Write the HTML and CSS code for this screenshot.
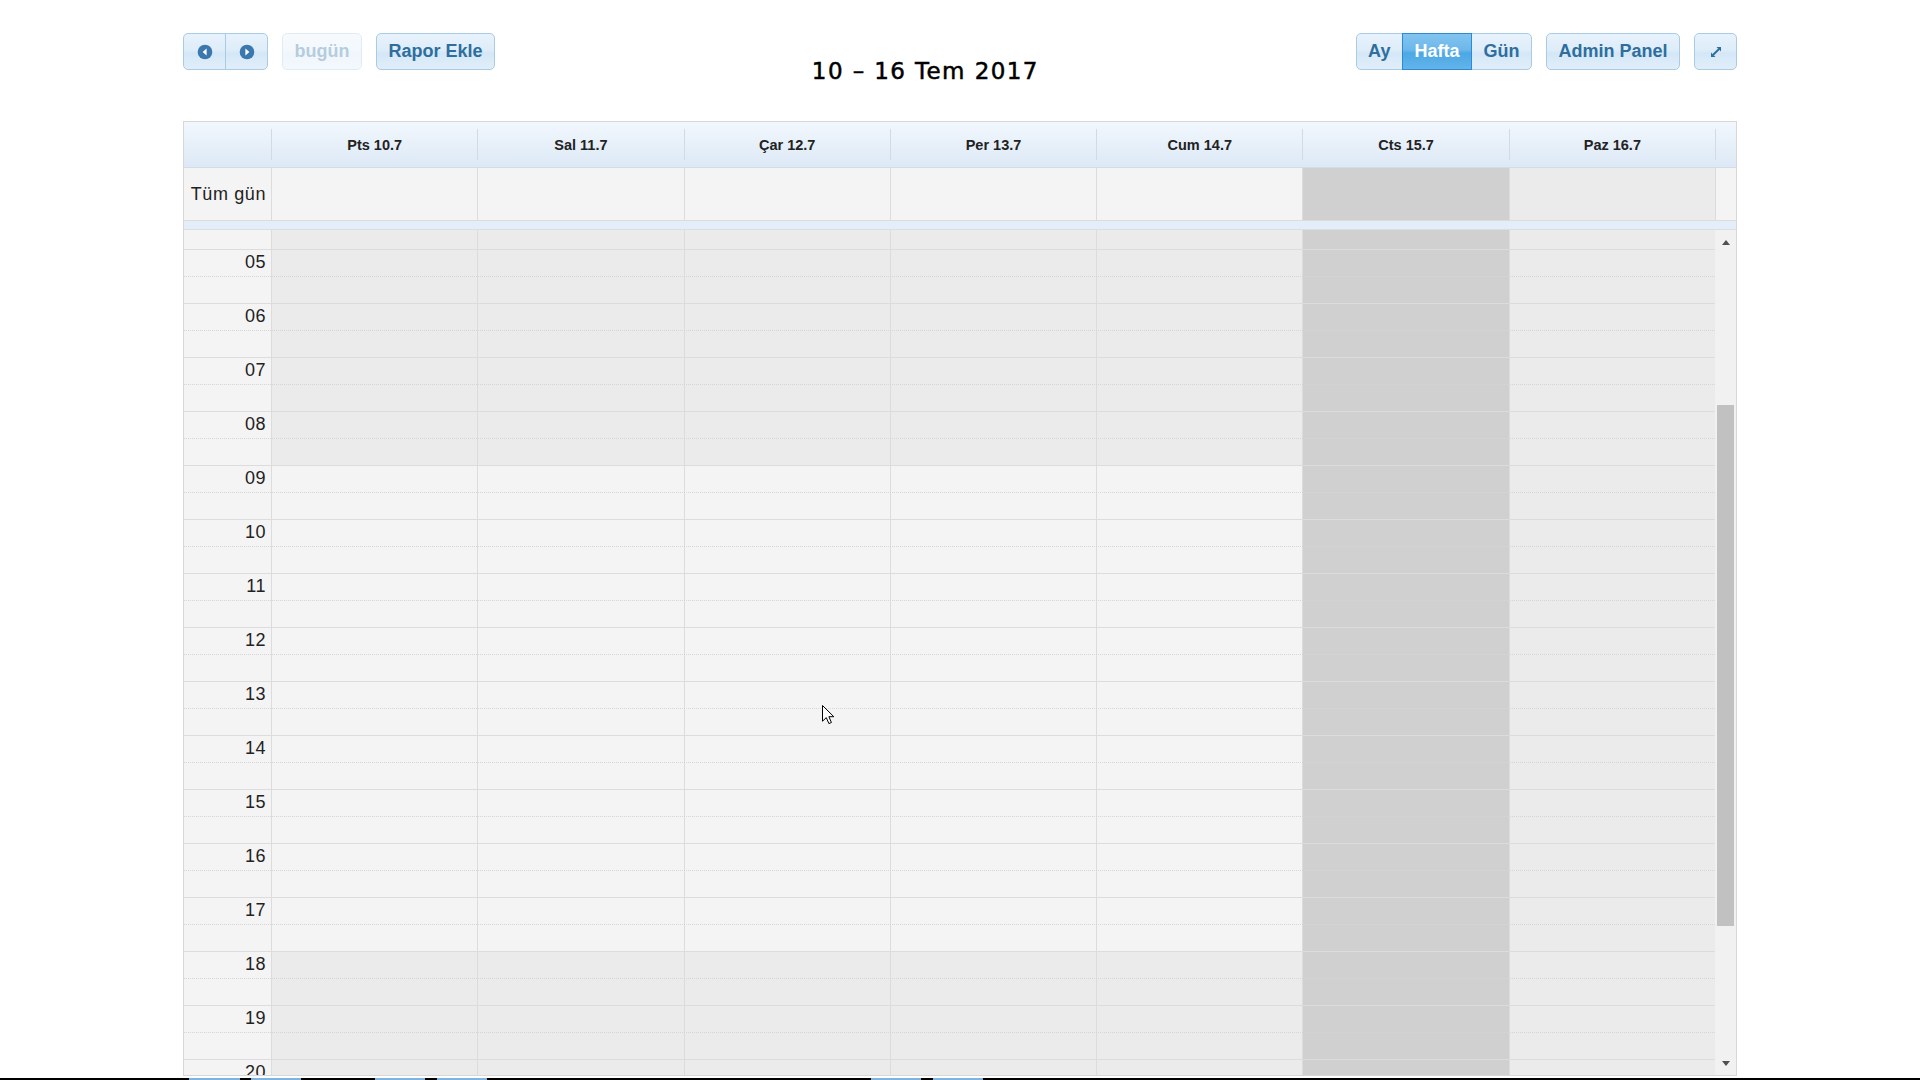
FILE: index.html
```html
<!DOCTYPE html>
<html lang="tr">
<head>
<meta charset="utf-8">
<title>Takvim</title>
<link rel="stylesheet" href="styles.css">
</head>
<body>
<div class="page">
  <div class="toolbar">
    <div class="tb-left">
      <div class="btn-group">
        <button class="btn btn-icon"><svg width="16" height="16" viewBox="0 0 16 16"><circle cx="8" cy="8" r="7.3" fill="#3a78ad"/><path d="M5.6 8 L9.6 4.6 L9.6 11.4 Z" fill="#fff"/></svg></button>
        <button class="btn btn-icon"><svg width="16" height="16" viewBox="0 0 16 16"><circle cx="8" cy="8" r="7.3" fill="#3a78ad"/><path d="M10.4 8 L6.4 4.6 L6.4 11.4 Z" fill="#fff"/></svg></button>
      </div>
      <button class="btn disabled">bugün</button>
      <button class="btn">Rapor Ekle</button>
    </div>
    <div class="tb-center"><h2 class="title">10 – 16 Tem 2017</h2></div>
    <div class="tb-right">
      <div class="btn-group">
        <button class="btn">Ay</button>
        <button class="btn active">Hafta</button>
        <button class="btn">Gün</button>
      </div>
      <button class="btn">Admin Panel</button>
      <button class="btn btn-icon"><svg width="12" height="12" viewBox="0 0 12 12"><path d="M6.5 1 H11 V5.5 Z M1 6.5 V11 H5.5 Z" fill="#2e6e9e"/><path d="M3 9 L9 3" stroke="#2e6e9e" stroke-width="2"/></svg></button>
    </div>
  </div>

  <div class="cal">
    <div class="cal-head">
      <div class="hcell"></div>
      <div class="hcell"><span>Pts 10.7</span></div>
      <div class="hcell"><span>Sal 11.7</span></div>
      <div class="hcell"><span>Çar 12.7</span></div>
      <div class="hcell"><span>Per 13.7</span></div>
      <div class="hcell"><span>Cum 14.7</span></div>
      <div class="hcell"><span>Cts 15.7</span></div>
      <div class="hcell"><span>Paz 16.7</span></div>
      <div class="hcell"><span></span></div>
    </div>
    <div class="allday">
      <div class="ad-axis">Tüm gün</div>
      <div class="ad-cell"></div>
      <div class="ad-cell"></div>
      <div class="ad-cell"></div>
      <div class="ad-cell"></div>
      <div class="ad-cell"></div>
      <div class="ad-cell sat"></div>
      <div class="ad-cell sun"></div>
      <div class="ad-cell"></div>
    </div>
    <div class="divider"></div>
    <div class="tg">
      <div class="tg-main">
        <div class="bg-layer">
          <div class="bcol axis"></div>
          <div class="bcol"><div class="seg-a off"></div><div class="seg-b on"></div><div class="seg-c off"></div></div>
          <div class="bcol"><div class="seg-a off"></div><div class="seg-b on"></div><div class="seg-c off"></div></div>
          <div class="bcol"><div class="seg-a off"></div><div class="seg-b on"></div><div class="seg-c off"></div></div>
          <div class="bcol"><div class="seg-a off"></div><div class="seg-b on"></div><div class="seg-c off"></div></div>
          <div class="bcol"><div class="seg-a off"></div><div class="seg-b on"></div><div class="seg-c off"></div></div>
          <div class="bcol sat"></div>
          <div class="bcol sun"></div>
        </div>
        <div class="slats">
          <div class="slat partial"></div>
          <div class="slat"><div class="lbl">05</div></div><div class="slat half"></div>
          <div class="slat"><div class="lbl">06</div></div><div class="slat half"></div>
          <div class="slat"><div class="lbl">07</div></div><div class="slat half"></div>
          <div class="slat"><div class="lbl">08</div></div><div class="slat half"></div>
          <div class="slat"><div class="lbl">09</div></div><div class="slat half"></div>
          <div class="slat"><div class="lbl">10</div></div><div class="slat half"></div>
          <div class="slat"><div class="lbl">11</div></div><div class="slat half"></div>
          <div class="slat"><div class="lbl">12</div></div><div class="slat half"></div>
          <div class="slat"><div class="lbl">13</div></div><div class="slat half"></div>
          <div class="slat"><div class="lbl">14</div></div><div class="slat half"></div>
          <div class="slat"><div class="lbl">15</div></div><div class="slat half"></div>
          <div class="slat"><div class="lbl">16</div></div><div class="slat half"></div>
          <div class="slat"><div class="lbl">17</div></div><div class="slat half"></div>
          <div class="slat"><div class="lbl">18</div></div><div class="slat half"></div>
          <div class="slat"><div class="lbl">19</div></div><div class="slat half"></div>
          <div class="slat"><div class="lbl">20</div></div><div class="slat half"></div>
          <div class="slat"><div class="lbl">21</div></div><div class="slat half"></div>
        </div>
      </div>
      <div class="sb">
        <div class="sb-btn"><span class="tri-up"></span></div>
        <div class="sb-thumb"></div>
        <div class="sb-btn sb-down"><span class="tri-down"></span></div>
      </div>
    </div>
  </div>
</div>
<div class="taskbar"></div>
<svg class="cursor" width="13" height="20" viewBox="0 0 13 20"><path d="M0.5 0.5 L0.5 16.2 L4.3 12.6 L6.9 18.6 L9.4 17.5 L6.9 11.7 L11.8 11.7 Z" fill="#fff" stroke="#000" stroke-width="1" stroke-linejoin="miter"/></svg>
</body>
</html>
```
FILE: styles.css
```css
html, body {
  margin: 0;
  padding: 0;
  background: #fff;
}
body {
  font-family: "Liberation Sans", Arial, sans-serif;
  color: #222;
  height: 1080px;
  overflow: hidden;
  position: relative;
}
.page {
  width: 1554px;
  margin: 0 auto;
  padding-top: 33px;
}

/* toolbar */
.toolbar {
  display: flex;
  align-items: flex-start;
  height: 37px;
  margin-bottom: 51px;
}
.tb-left, .tb-right {
  display: flex;
  gap: 14px;
}
.tb-center {
  flex: 1;
  text-align: center;
}
.title {
  margin: 27px 0 0;
  font: 400 23px/22px "DejaVu Sans", sans-serif;
  letter-spacing: 1.4px;
  -webkit-text-stroke: 0.5px #000;
  color: #000;
  white-space: nowrap;
}
.btn-group {
  display: flex;
}
.btn {
  height: 37px;
  box-sizing: border-box;
  border: 1px solid #a9cbe4;
  border-radius: 5px;
  padding: 0 11.5px;
  margin: 0;
  background: linear-gradient(to bottom, #e7f2fc 0%, #dfedf9 45%, #d4e7f7 55%, #e1eef9 100%);
  color: #2e6e9e;
  font: 700 18px/35px "Liberation Sans", Arial, sans-serif;
  display: flex;
  align-items: center;
  justify-content: center;
  cursor: default;
  white-space: nowrap;
}
.btn-group .btn {
  border-radius: 0;
}
.btn-group .btn + .btn {
  margin-left: -1px;
}
.btn-group .btn:first-child {
  border-radius: 5px 0 0 5px;
}
.btn-group .btn:last-child {
  border-radius: 0 5px 5px 0;
}
.btn.active {
  background: linear-gradient(to bottom, #82c4ef 0%, #6cb8eb 45%, #4ca8e4 55%, #63b4e9 100%);
  border-color: #2b8ad5;
  color: #fff;
  position: relative;
  z-index: 1;
}
.btn.disabled {
  opacity: 0.35;
}
.btn-icon {
  width: 43px;
  padding: 0;
}
.btn svg {
  display: block;
}

/* calendar */
.cal {
  border: 1px solid #d8d8d8;
  height: 955px;
  box-sizing: border-box;
  display: flex;
  flex-direction: column;
}
.cal-head {
  display: grid;
  grid-template-columns: 87px repeat(7, 1fr) 21px;
  height: 46px;
  flex-shrink: 0;
  box-sizing: border-box;
  border-bottom: 1px solid #d3dce6;
  background: linear-gradient(to bottom, #f2f7fd, #dce9f6);
}
.hcell {
  display: flex;
  align-items: center;
}
.hcell span {
  flex: 1;
  height: 31px;
  border-left: 1px solid #d2dae3;
  display: flex;
  align-items: center;
  justify-content: center;
  font-weight: 700;
  font-size: 14.5px;
  color: #222;
}
.allday {
  display: grid;
  grid-template-columns: 87px repeat(7, 1fr) 21px;
  height: 53px;
  flex-shrink: 0;
  box-sizing: border-box;
  border-bottom: 1px solid #dcdcdc;
}
.ad-axis {
  background: #f4f4f4;
  text-align: right;
  padding-right: 5px;
  font-size: 18px;
  line-height: 52px;
  letter-spacing: 0.6px;
  white-space: nowrap;
}
.ad-cell {
  border-left: 1px solid #dcdcdc;
  background: #f4f4f4;
}
.ad-cell.sat, .bcol.sat {
  background: #d0d0d0;
}
.ad-cell.sun, .bcol.sun {
  background: #ebebeb;
}
.divider {
  height: 9px;
  flex-shrink: 0;
  box-sizing: border-box;
  background: #e3eef9;
  border-bottom: 1px solid #d6dee6;
}
.tg {
  height: 845px;
  display: grid;
  grid-template-columns: 1fr 21px;
  grid-template-rows: 845px;
  overflow: hidden;
}
.tg-main {
  display: grid;
  overflow: hidden;
  min-width: 0;
}
.bg-layer, .slats {
  grid-area: 1 / 1;
}
.bg-layer {
  display: grid;
  grid-template-columns: 87px repeat(7, 1fr);
}
.bcol {
  border-left: 1px solid #dcdcdc;
  display: flex;
  flex-direction: column;
}
.bcol.axis {
  border-left: 0;
  background: #f4f4f4;
}
.seg-a { height: 235px; }
.seg-b { height: 486px; }
.seg-c { flex: 1; }
.off { background: #ebebeb; }
.on { background: #f4f4f4; }

.slats {
  display: flex;
  flex-direction: column;
}
.slat {
  height: 27px;
  flex-shrink: 0;
  box-sizing: border-box;
  border-top: 1px solid #dcdcdc;
  display: flex;
}
.slat.half {
  border-top: 1px dotted #d6d6d6;
}
.slat.partial {
  height: 19px;
  border-top: 0;
}
.lbl {
  width: 87px;
  box-sizing: border-box;
  text-align: right;
  padding-right: 5px;
  font-size: 18px;
  line-height: 24px;
  letter-spacing: 0.5px;
  color: #222;
}

/* scrollbar */
.sb {
  background: #f1f1f1;
  display: flex;
  flex-direction: column;
  align-items: center;
}
.sb-btn {
  height: 24px;
  width: 100%;
  flex-shrink: 0;
  display: flex;
  align-items: center;
  justify-content: center;
}
.sb-down {
  margin-top: auto;
}
.tri-up {
  width: 0;
  height: 0;
  border-left: 4.5px solid transparent;
  border-right: 4.5px solid transparent;
  border-bottom: 5px solid #505050;
}
.tri-down {
  width: 0;
  height: 0;
  border-left: 4.5px solid transparent;
  border-right: 4.5px solid transparent;
  border-top: 5px solid #505050;
}
.sb-thumb {
  width: 17px;
  height: 521px;
  margin-top: 151px;
  background: #c1c1c1;
  flex-shrink: 0;
}

/* bottom strip */
.taskbar {
  height: 2px;
  margin-top: 2px;
  background: linear-gradient(to right,
    #000 0, #000 189px,
    #7fb3e0 189px, #7fb3e0 240px,
    #000 240px, #000 251px,
    #7fb3e0 251px, #7fb3e0 301px,
    #000 301px, #000 375px,
    #7fb3e0 375px, #7fb3e0 425px,
    #000 425px, #000 437px,
    #7fb3e0 437px, #7fb3e0 487px,
    #000 487px, #000 871px,
    #7fb3e0 871px, #7fb3e0 921px,
    #000 921px, #000 933px,
    #7fb3e0 933px, #7fb3e0 983px,
    #000 983px, #000 100%);
}

.cursor {
  position: absolute;
  left: 822px;
  top: 705px;
}
```
